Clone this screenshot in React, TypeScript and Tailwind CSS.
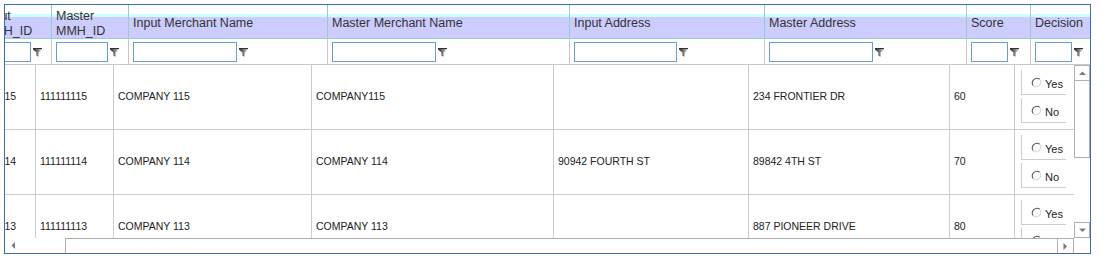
import React from 'react';

const headerCols = [
  { w: 'w-[77px]', label: 'Input MMH_ID', input: 'w-[52px]', pad: 'pl-[8px]' },
  { w: 'w-[77px]', label: 'Master MMH_ID', input: 'w-[52px]', pad: 'pl-[4px]' },
  { w: 'w-[199px]', label: 'Input Merchant Name', input: 'w-[104px]', pad: 'pl-[4px]' },
  { w: 'w-[242px]', label: 'Master Merchant Name', input: 'w-[104px]', pad: 'pl-[4px]' },
  { w: 'w-[195px]', label: 'Input Address', input: 'w-[103px]', pad: 'pl-[4px]' },
  { w: 'w-[202px]', label: 'Master Address', input: 'w-[104px]', pad: 'pl-[4px]' },
  { w: 'w-[64px]', label: 'Score', input: 'w-[37px]', pad: 'pl-[4px]' },
  { w: 'w-[80px]', label: 'Decision', input: 'w-[37px]', pad: 'pl-[4px]' },
];

const bodyCols = [
  { w: 'w-[77px]', pad: 'pl-[10px]' },
  { w: 'w-[78px]', pad: 'pl-[4px]' },
  { w: 'w-[198px]', pad: 'pl-[4px]' },
  { w: 'w-[242px]', pad: 'pl-[4px]' },
  { w: 'w-[195px]', pad: 'pl-[4px]' },
  { w: 'w-[201px]', pad: 'pl-[4px]' },
  { w: 'w-[65px]', pad: 'pl-[4px]' },
];

const rows = [
  ['111111115', '111111115', 'COMPANY 115', 'COMPANY115', '', '234 FRONTIER DR', '60'],
  ['111111114', '111111114', 'COMPANY 114', 'COMPANY 114', '90942 FOURTH ST', '89842 4TH ST', '70'],
  ['111111113', '111111113', 'COMPANY 113', 'COMPANY 113', '', '887 PIONEER DRIVE', '80'],
];

const FilterIcon = () => (
  <svg width="9" height="9" viewBox="0 0 9 9" className="shrink-0">
    <defs>
      <linearGradient id="fg" x1="0" y1="0" x2="1" y2="0">
        <stop offset="0" stopColor="#222" />
        <stop offset="0.6" stopColor="#888" />
        <stop offset="1" stopColor="#ddd" />
      </linearGradient>
    </defs>
    <path d="M0 0.5 H9 V1.5 L5.6 4.6 V8.8 L3.4 7.8 V4.6 L0 1.5 Z" fill="url(#fg)" />
    <path d="M0 0.5 H9" stroke="#333" strokeWidth="1" />
  </svg>
);

const Radio = () => (
  <svg width="11" height="11" viewBox="0 0 12 12" className="shrink-0">
    <circle cx="6" cy="6" r="5" fill="#fff" />
    <path d="M2.5 9.5 A5 5 0 0 1 9.5 2.5" fill="none" stroke="#555" strokeWidth="1.2" />
    <path d="M9.5 2.5 A5 5 0 0 1 2.5 9.5" fill="none" stroke="#d8d8d8" strokeWidth="1.2" />
  </svg>
);

const Arrow = ({ dir }: { dir: 'up' | 'down' | 'left' | 'right' }) => {
  const pts = {
    up: '0,4 3.5,0.5 7,4',
    down: '0,0.5 3.5,4 7,0.5',
    left: '4,0 0.5,3.5 4,7',
    right: '0.5,0 4,3.5 0.5,7',
  }[dir];
  const vertical = dir === 'up' || dir === 'down';
  return (
    <svg width={vertical ? 7 : 5} height={vertical ? 5 : 7} viewBox={vertical ? '0 0 7 5' : '0 0 5 7'}>
      <polygon points={pts} fill="#7a7a7a" />
    </svg>
  );
};

const DecisionOption = ({ label, first }: { label: string; first?: boolean }) => (
  <div className={`w-[45px] h-[25px] shrink-0 border-l border-b border-[#cccccc] flex items-start pl-[9px] pt-[7px] gap-[3px] ${first ? '' : 'mt-[3px]'}`}>
    <Radio />
    <span className="mt-[1px] text-[11px] leading-[13px] text-[#222]">{label}</span>
  </div>
);

export default function App() {
  return (
    <div className="w-[1118px] h-[264px] bg-white pl-[4px] pt-[4px] font-['Liberation_Sans',Arial,sans-serif]">
      <div className="w-[1087px] h-[250px] border border-[#3a6ea5] flex flex-col overflow-hidden">
        {/* header + filter */}
        <div className="overflow-hidden shrink-0">
          <div className="flex ml-[-30px] w-max h-[34px] border-b border-[#99cccc] bg-[linear-gradient(to_bottom,#ffffff_0px,#ffffff_9px,#ccffff_9px,#ccffff_12px,#ccccff_12px,#ccccff_100%)]">
            {headerCols.map((c) => (
              <div key={c.label} className={`${c.w} ${c.pad} shrink-0 border-r border-[#99cccc] flex items-center pt-[4px] pr-[4px] text-[12.5px] leading-[15px] text-[#333]`}>
                {c.label}
              </div>
            ))}
          </div>
          <div className="flex ml-[-30px] w-max h-[26px] border-b border-[#c8c8c8] bg-white">
            {headerCols.map((c) => (
              <div key={c.label} className={`${c.w} shrink-0 border-r border-[#c8c8c8] flex items-start pt-[3px] pl-[4px]`}>
                <div className="flex items-center gap-[2px]">
                  <div className={`${c.input} h-[20px] border border-[#6b9bd2] bg-white shrink-0`} />
                  <FilterIcon />
                </div>
              </div>
            ))}
          </div>
        </div>

        {/* body */}
        <div className="flex h-[173px] shrink-0">
          <div className="flex-1 overflow-hidden">
            <div className="ml-[-46px] w-max">
              {rows.map((r, i) => (
                <div key={i} className="flex h-[65px] border-b border-[#cccccc]">
                  {r.map((v, j) => (
                    <div key={j} className={`${bodyCols[j].w} ${bodyCols[j].pad} shrink-0 border-r border-[#cccccc] flex items-center pr-[4px] whitespace-nowrap overflow-hidden text-[10.5px] text-[#222]`}>
                      {v}
                    </div>
                  ))}
                  <div className="w-[80px] shrink-0 flex flex-col pt-[5px] pl-[6px]">
                    <DecisionOption label="Yes" first />
                    <DecisionOption label="No" />
                  </div>
                </div>
              ))}
            </div>
          </div>
          {/* vertical scrollbar */}
          <div className="w-[16px] shrink-0 flex flex-col">
            <div className="h-[16px] border border-[#b0b0b0] flex items-center justify-center">
              <Arrow dir="up" />
            </div>
            <div className="h-[77px] border-x border-b border-[#b0b0b0]" />
            <div className="flex-1" />
            <div className="h-[16px] border border-[#b0b0b0] flex items-center justify-center">
              <Arrow dir="down" />
            </div>
          </div>
        </div>

        {/* horizontal scrollbar */}
        <div className="flex h-[15px] shrink-0">
          <div className="w-[16px] flex items-center justify-center">
            <Arrow dir="left" />
          </div>
          <div className="w-[44px]" />
          <div className="w-[992px] border-t border-l border-[#b0b0b0]" />
          <div className="w-[17px] border-t border-x border-[#b0b0b0] flex items-center justify-center">
            <Arrow dir="right" />
          </div>
          <div className="flex-1" />
        </div>
      </div>
    </div>
  );
}
